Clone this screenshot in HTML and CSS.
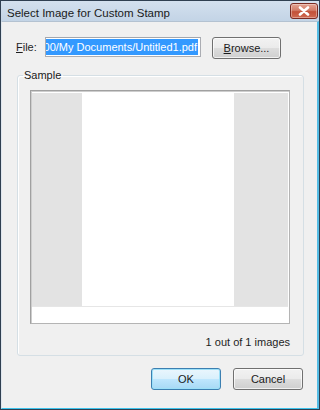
FILE: index.html
```html
<!DOCTYPE html>
<html>
<head>
<meta charset="utf-8">
<link rel="stylesheet" href="styles.css">
</head>
<body>
<div class="window">
  <div class="titlebar">
    <span class="title">Select Image for Custom Stamp</span>
    <span class="close">
      <svg width="12" height="10" viewBox="0 0 12 10"><path d="M2 1.5 L10 8.5 M10 1.5 L2 8.5" stroke="#fff" stroke-width="2.6" stroke-linecap="round"/></svg>
    </span>
  </div>
  <div class="body">
    <div class="file-row">
      <span class="file-label"><u>F</u>ile:</span>
      <div class="field"><span class="sel">C:/Documents and Settings/200/My Documents/Untitled1.pdf</span></div>
      <button class="btn browse"><u>B</u>rowse...</button>
    </div>
    <fieldset class="group">
      <legend>Sample</legend>
      <div class="preview">
        <div class="canvas"><div class="page"></div></div>
        <div class="strip"></div>
      </div>
      <div class="count">1 out of 1 images</div>
    </fieldset>
    <div class="actions">
      <button class="btn ok">OK</button>
      <button class="btn cancel">Cancel</button>
    </div>
  </div>
</div>
</body>
</html>
```
FILE: styles.css
```css
* { box-sizing: border-box; }
html, body { margin: 0; padding: 0; }
body {
  width: 320px;
  height: 410px;
  overflow: hidden;
  font-family: "Liberation Sans", Arial, sans-serif;
  font-size: 11px;
  color: #1e1e1e;
  background: #f0f0f0;
}
.window {
  width: 320px;
  height: 410px;
  border: 1px solid #2f3f51;
  display: flex;
  flex-direction: column;
}
.titlebar {
  height: 20px;
  flex: none;
  background: linear-gradient(#d3e0ee, #c3d4e6);
  display: flex;
  align-items: flex-start;
  justify-content: space-between;
  padding-left: 6px;
}
.title {
  line-height: 14px;
  margin-top: 5px;
  font-size: 11.5px;
  color: #1a1a1a;
}
.close {
  width: 28px;
  height: 16px;
  margin-top: 2px;
  margin-right: 1px;
  border: 1px solid #7a2a22;
  border-radius: 3px;
  background: linear-gradient(#e3a393 0%, #d27c68 45%, #c25038 55%, #cf6a52 100%);
  box-shadow: inset 0 0 0 1px rgba(255,255,255,0.35);
  display: flex;
  align-items: center;
  justify-content: center;
}
.body {
  flex: 1;
  background: #f0f0f0;
  border-top: 1px solid #b4c2d1;
  border-left: 1px solid #dfe6ee;
  border-right: 2px solid #55bde6;
  border-bottom: 1px solid #3cc3ec;
  padding: 15px 0 0 14px;
}
.file-row {
  display: flex;
  align-items: flex-start;
  height: 22px;
}
.file-label {
  width: 29px;
  line-height: 20px;
  white-space: nowrap;
}
.field {
  width: 156px;
  height: 20px;
  border: 1px solid #abadb3;
  border-top-color: #a3a6ad;
  background: #fff;
  padding: 1px 2px 1px 1px;
  display: flex;
  justify-content: flex-end;
  overflow: hidden;
}
.sel {
  flex: none;
  white-space: nowrap;
  background: #3399ff;
  color: #fff;
  line-height: 16px;
  padding-right: 1px;
}
.btn {
  font-family: "Liberation Sans", Arial, sans-serif;
  font-size: 11px;
  color: #1a1a1a;
  height: 22px;
  width: 70px;
  padding: 0;
  border: 1px solid #707070;
  border-radius: 3px;
  background: linear-gradient(#f2f2f2 0%, #ebebeb 48%, #dddddd 52%, #cfcfcf 100%);
  box-shadow: inset 0 0 0 1px rgba(255,255,255,0.7);
}
.browse {
  width: 69px;
  margin-left: 11px;
}
.group {
  margin: 10px 0 0 1px;
  width: 287px;
  border: 1px solid #d5dfe5;
  border-radius: 3px;
  padding: 8px 13px 6px 12px;
  box-shadow: inset 1px 1px 0 #fff;
}
.group legend {
  padding: 0 2px 0 1px;
  margin-left: -7px;
  line-height: 13px;
  color: #1a1a1a;
}
.preview {
  width: 260px;
  height: 234px;
  border: 1px solid #a0a0a0;
  border-right-color: #b4b4b4;
  border-bottom-color: #b4b4b4;
  background: #fff;
  padding: 2px 1px 1px 1px;
  box-shadow: inset 1px 1px 0 #cdcdcd;
}
.canvas {
  height: 213px;
  background: #e3e3e3;
  display: flex;
}
.page {
  margin-left: 50px;
  width: 152px;
  background: #fff;
}
.strip {
  height: 16px;
  border-top: 1px solid #e6e6e6;
  background: #fff;
}
.count {
  text-align: right;
  line-height: 14px;
  margin-top: 11px;
}
.actions {
  display: flex;
  justify-content: flex-end;
  gap: 12px;
  width: 287px;
  margin-left: 1px;
  margin-top: 12px;
  padding-right: 1px;
}
.ok {
  border-color: #3c7fb1;
  background: linear-gradient(#eaf6fd 0%, #d9f0fc 48%, #bee6fd 52%, #a7d9f5 100%);
  box-shadow: inset 0 0 0 1px #9ce0f8;
}
```
